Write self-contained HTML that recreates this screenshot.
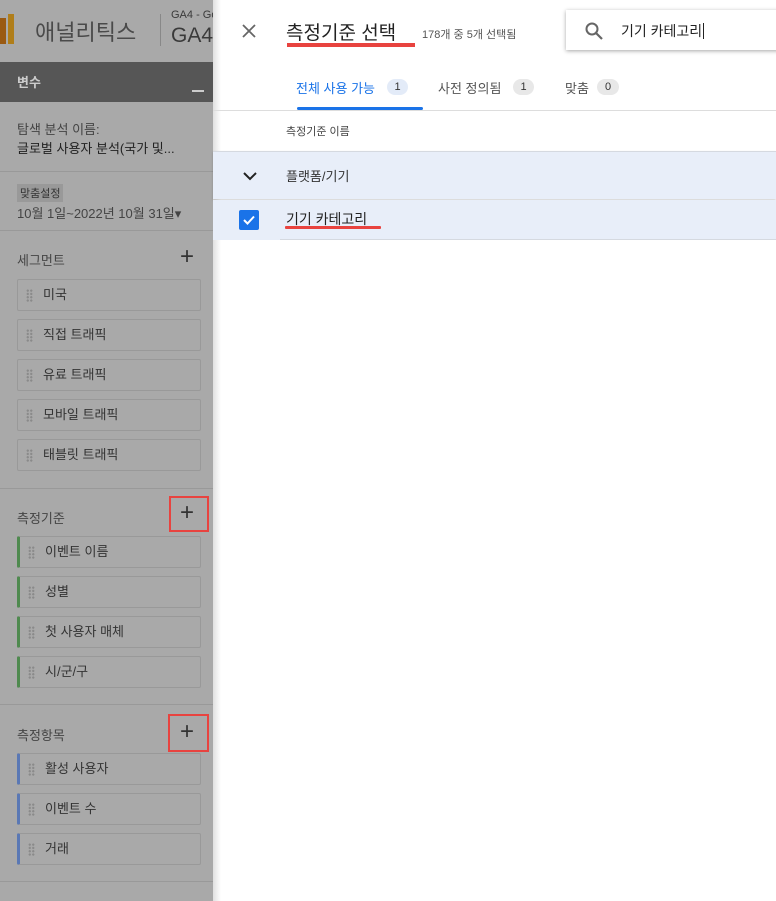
<!DOCTYPE html>
<html><head><meta charset="utf-8"><style>
*{margin:0;padding:0;box-sizing:border-box}
body{width:776px;height:901px;overflow:hidden;position:relative;background:#fff;font-family:"Liberation Sans","Noto Sans CJK KR",sans-serif}
.a{position:absolute}
#left{left:0;top:0;width:213px;height:901px;background:#a9a9a9;overflow:hidden}
.t{color:#3a3a3a;font-size:13px;white-space:nowrap}
.box{position:absolute;left:17px;width:184px;height:32px;border:1px solid #999;border-radius:2px;background:#a9a9a9;font-size:13px;color:#333;line-height:30px;padding-left:25px}
.box:before{content:"";position:absolute;left:8px;top:9px;width:7px;height:13px;background:radial-gradient(circle,#8a8a8a 1px,transparent 1.3px) 0 0/3.5px 3.3px}
.g{border-left:3px solid #4f8a4f}
.b{border-left:3px solid #5a78b5}
.hr{left:0;width:213px;height:1px;background:#999}
.plus{font-size:24px;color:#333;font-weight:300}
.red{border:2px solid #e8433f}
.pill{position:absolute;height:16px;border-radius:8px;font-size:11px;display:flex;align-items:center;justify-content:center;color:#333}
</style></head><body>
<div id="left" class="a">
 <div class="a" style="left:0;top:18px;width:6px;height:26px;background:#9a5a12"></div>
 <div class="a" style="left:8px;top:14px;width:6px;height:30px;background:#b07e1a"></div>
 <div class="a t" style="left:35px;top:15px;font-size:22px;color:#4a4a4a">애널리틱스</div>
 <div class="a" style="left:160px;top:14px;width:1px;height:32px;background:#888"></div>
 <div class="a t" style="left:171px;top:9px;font-size:11px">GA4 - Go</div>
 <div class="a t" style="left:171px;top:24px;font-size:21px;color:#3a3a3a">GA4</div>
 <div class="a" style="left:0;top:62px;width:213px;height:40px;background:#565656"></div>
 <div class="a t" style="left:17px;top:72px;color:#ccc;font-weight:bold;font-size:13px">변수</div>
 <div class="a" style="left:192px;top:90px;width:12px;height:2px;background:#ccc"></div>
 <div class="a t" style="left:17px;top:119px;font-size:13px;color:#444">탐색 분석 이름:</div>
 <div class="a t" style="left:17px;top:138px;font-size:13px;color:#222">글로벌 사용자 분석(국가 및...</div>
 <div class="a hr" style="top:171px"></div>
 <div class="a t" style="left:17px;top:184px;font-size:11px;background:#999;padding:1px 3px;color:#333">맞춤설정</div>
 <div class="a t" style="left:17px;top:203px;font-size:13px;color:#444">10월 1일~2022년 10월 31일▾</div>
 <div class="a hr" style="top:230px"></div>
 <div class="a t" style="left:17px;top:250px;font-size:13px;color:#444">세그먼트</div>
 <div class="a plus" style="left:180px;top:243px">+</div>
 <div class="box" style="top:279px">미국</div>
 <div class="box" style="top:319px">직접 트래픽</div>
 <div class="box" style="top:359px">유료 트래픽</div>
 <div class="box" style="top:399px">모바일 트래픽</div>
 <div class="box" style="top:439px">태블릿 트래픽</div>
 <div class="a hr" style="top:488px"></div>
 <div class="a t" style="left:17px;top:508px;font-size:13px;color:#444">측정기준</div>
 <div class="a red" style="left:169px;top:496px;width:40px;height:36px"></div>
 <div class="a plus" style="left:180px;top:499px">+</div>
 <div class="box g" style="top:536px">이벤트 이름</div>
 <div class="box g" style="top:576px">성별</div>
 <div class="box g" style="top:616px">첫 사용자 매체</div>
 <div class="box g" style="top:656px">시/군/구</div>
 <div class="a hr" style="top:704px"></div>
 <div class="a t" style="left:17px;top:725px;font-size:13px;color:#444">측정항목</div>
 <div class="a red" style="left:168px;top:714px;width:41px;height:38px"></div>
 <div class="a plus" style="left:180px;top:718px">+</div>
 <div class="box b" style="top:753px">활성 사용자</div>
 <div class="box b" style="top:793px">이벤트 수</div>
 <div class="box b" style="top:833px">거래</div>
 <div class="a hr" style="top:881px"></div>
</div>
<div class="a" style="left:213px;top:0;width:8px;height:901px;background:linear-gradient(90deg,rgba(0,0,0,.12),rgba(0,0,0,0))"></div>
<svg class="a" style="left:241px;top:23px" width="16" height="16" viewBox="0 0 16 16"><path d="M2 2L14 14M14 2L2 14" stroke="#666" stroke-width="1.8"/></svg>
<div class="a t" style="left:286px;top:18px;font-size:19px;color:#222">측정기준 선택</div>
<div class="a" style="left:287px;top:43px;width:128px;height:4px;background:#e8433f"></div>
<div class="a t" style="left:422px;top:26px;font-size:11px;color:#555">178개 중 5개 선택됨</div>
<div class="a" style="left:566px;top:10px;width:214px;height:40px;background:#fff;box-shadow:0 1px 4px rgba(0,0,0,.35)"></div>
<svg class="a" style="left:584px;top:21px" width="20" height="20" viewBox="0 0 20 20"><circle cx="8" cy="8" r="5.5" fill="none" stroke="#666" stroke-width="2"/><path d="M12 12L18 18" stroke="#666" stroke-width="2.2"/></svg>
<div class="a t" style="left:621px;top:21px;font-size:14px;color:#222">기기 카테고리<span style="border-left:1px solid #222;margin-left:1px"></span></div>
<div class="a t" style="left:296px;top:78px;font-size:13px;color:#1a73e8">전체 사용 가능</div>
<div class="pill" style="left:387px;top:79px;width:21px;background:#e3ebf8">1</div>
<div class="a" style="left:297px;top:107px;width:126px;height:3px;background:#1a73e8;border-radius:2px"></div>
<div class="a t" style="left:438px;top:78px;font-size:13px;color:#555">사전 정의됨</div>
<div class="pill" style="left:513px;top:79px;width:21px;background:#e8e8e8">1</div>
<div class="a t" style="left:565px;top:78px;font-size:13px;color:#555">맞춤</div>
<div class="pill" style="left:597px;top:79px;width:22px;background:#e8e8e8">0</div>
<div class="a" style="left:213px;top:110px;width:563px;height:1px;background:#ddd"></div>
<div class="a t" style="left:286px;top:123px;font-size:11px;color:#444">측정기준 이름</div>
<div class="a" style="left:213px;top:151px;width:563px;height:48px;background:#e8eef9;border-top:1px solid #d5d9e0;box-shadow:0 1px 2px rgba(0,0,0,.2)"></div>
<svg class="a" style="left:242px;top:170px" width="16" height="12" viewBox="0 0 16 12"><path d="M2 3L8 9L14 3" fill="none" stroke="#222" stroke-width="2"/></svg>
<div class="a t" style="left:286px;top:166px;font-size:13px;color:#333">플랫폼/기기</div>
<div class="a" style="left:213px;top:200px;width:563px;height:40px;background:#e8eef9"></div>
<div class="a" style="left:280px;top:239px;width:496px;height:1px;background:#d5d9e0"></div>
<div class="a" style="left:239px;top:210px;width:20px;height:20px;background:#1a73e8;border-radius:2px"></div>
<svg class="a" style="left:239px;top:210px" width="20" height="20" viewBox="0 0 20 20"><path d="M5 10L8.5 13.5L15 6.5" fill="none" stroke="#fff" stroke-width="2"/></svg>
<div class="a t" style="left:286px;top:209px;font-size:14px;color:#222">기기 카테고리</div>
<div class="a" style="left:285px;top:226px;width:96px;height:3px;background:#e8433f;border-radius:1px"></div>
</body></html>
